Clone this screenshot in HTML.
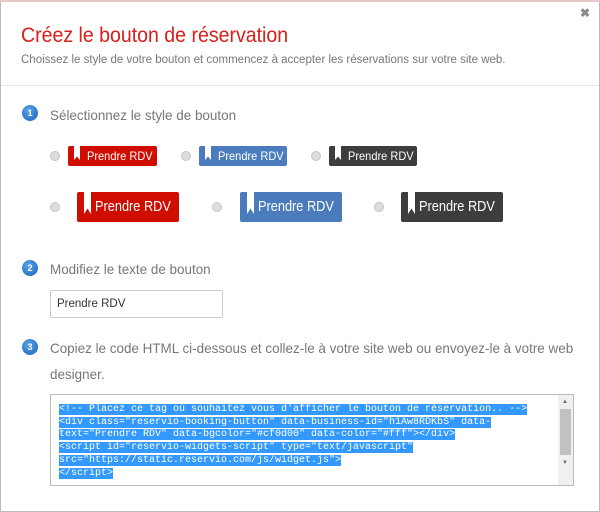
<!DOCTYPE html>
<html><head><meta charset="utf-8"><style>
*{box-sizing:border-box;margin:0;padding:0}
body{width:600px;height:507px;overflow:hidden;background:#fff;font-family:"Liberation Sans",sans-serif;position:relative}
.a{position:absolute;white-space:nowrap}
.modal{left:0;top:2px;width:600px;height:510px;border:1px solid #bbb;border-top:none;background:#fff}
.top{left:0;top:0;width:600px;height:3px;background:#e8c8c8}
h1{position:absolute;left:21px;top:24px;font-size:21px;font-weight:normal;color:#d6201b;white-space:nowrap;transform:scaleX(.93);transform-origin:0 0}
.sub{left:21px;top:54px;font-size:11.5px;color:#777}
.hr{left:1px;top:85px;width:598px;height:1px;background:#e5e5e5}
.num{width:16px;height:16px;border-radius:50%;background:radial-gradient(circle at 40% 35%,#5aa3e8,#1b63bd);color:#fff;font-size:9px;font-weight:bold;text-align:center;line-height:16px}
.lab{font-size:14px;color:#777;transform:scaleX(.96);transform-origin:0 0}
.r{width:10px;height:10px;border-radius:50%;background:#ddd;border:1px solid #c4c4c4}
.b{color:#fff;font-size:12px;border-radius:2px}
.b span{display:inline-block;transform:scaleX(.92);transform-origin:0 0;margin-left:19px}
.b::before{content:"";position:absolute;left:6px;top:0;width:6px;height:14px;background:#fff;clip-path:polygon(0 0,100% 0,100% 100%,50% 75%,0 100%)}
.big{font-size:14.5px}
.big span{transform:scaleX(.88);margin-left:18px}
.big::before{left:7px;width:7px;height:22px}
.red{background:#cf0d00}.blue{background:#4a7cbd}.dark{background:#3d3d3d}
.inp{left:50px;top:290px;width:173px;height:28px;border:1px solid #ccc;border-radius:2px;font-size:11.5px;padding:7px 6px;color:#333}
.ta{left:50px;top:394px;width:524px;height:92px;border:1px solid #bbb}
.code{left:59px;top:404px;font-family:"Liberation Mono",monospace;font-size:10px;line-height:12.7px;color:#fff}
.code span{background:#3399ff}
</style></head><body>
<div class="a top"></div>
<div class="a modal"></div>
<div class="a" style="left:580px;top:6px;font-size:12px;color:#888;font-weight:bold">✖</div>
<h1>Créez le bouton de réservation</h1>
<div class="a sub">Choissez le style de votre bouton et commencez à accepter les réservations sur votre site web.</div>
<div class="a hr"></div>

<div class="a num" style="left:22px;top:105px">1</div>
<div class="a lab" style="left:50px;top:107px">Sélectionnez le style de bouton</div>

<div class="a r" style="left:50px;top:151px"></div>
<div class="a b red" style="left:68px;top:146px;width:89px;height:20px;line-height:20px"><span>Prendre RDV</span></div>
<div class="a r" style="left:181px;top:151px"></div>
<div class="a b blue" style="left:199px;top:146px;width:88px;height:20px;line-height:20px"><span>Prendre RDV</span></div>
<div class="a r" style="left:311px;top:151px"></div>
<div class="a b dark" style="left:329px;top:146px;width:88px;height:20px;line-height:20px"><span>Prendre RDV</span></div>

<div class="a r" style="left:50px;top:202px"></div>
<div class="a b big red" style="left:77px;top:192px;width:102px;height:30px;line-height:30px"><span>Prendre RDV</span></div>
<div class="a r" style="left:212px;top:202px"></div>
<div class="a b big blue" style="left:240px;top:192px;width:102px;height:30px;line-height:30px"><span>Prendre RDV</span></div>
<div class="a r" style="left:374px;top:202px"></div>
<div class="a b big dark" style="left:401px;top:192px;width:102px;height:30px;line-height:30px"><span>Prendre RDV</span></div>

<div class="a num" style="left:22px;top:260px">2</div>
<div class="a lab" style="left:50px;top:261px">Modifiez le texte de bouton</div>
<div class="a inp">Prendre RDV</div>

<div class="a num" style="left:22px;top:339px">3</div>
<div class="a lab" style="left:50px;top:335px;line-height:26px">Copiez le code HTML ci-dessous et collez-le à votre site web ou envoyez-le à votre web<br>designer.</div>

<div class="a ta"></div>
<div class="a" style="left:558px;top:395px;width:15px;height:90px;background:#f0f0f0"></div>
<div class="a" style="left:560px;top:409px;width:11px;height:46px;background:#c1c1c1"></div>
<div class="a" style="left:562px;top:399px;font-size:6px;color:#666">▲</div>
<div class="a" style="left:562px;top:460px;font-size:6px;color:#666">▼</div>
<div class="a code"><span>&lt;!-- Placez ce tag où souhaitez vous d'afficher le bouton de réservation.. --&gt;</span><br><span>&lt;div class="reservio-booking-button" data-business-id="h1Aw8RDKbS" data-</span><br><span>text="Prendre RDV" data-bgcolor="#cf0d00" data-color="#fff"&gt;&lt;/div&gt;</span><br><span>&lt;script id="reservio-widgets-script" type="text/javascript"</span><br><span>src="https://static.reservio.com/js/widget.js"&gt;</span><br><span>&lt;/script&gt;</span></div>
</body></html>
